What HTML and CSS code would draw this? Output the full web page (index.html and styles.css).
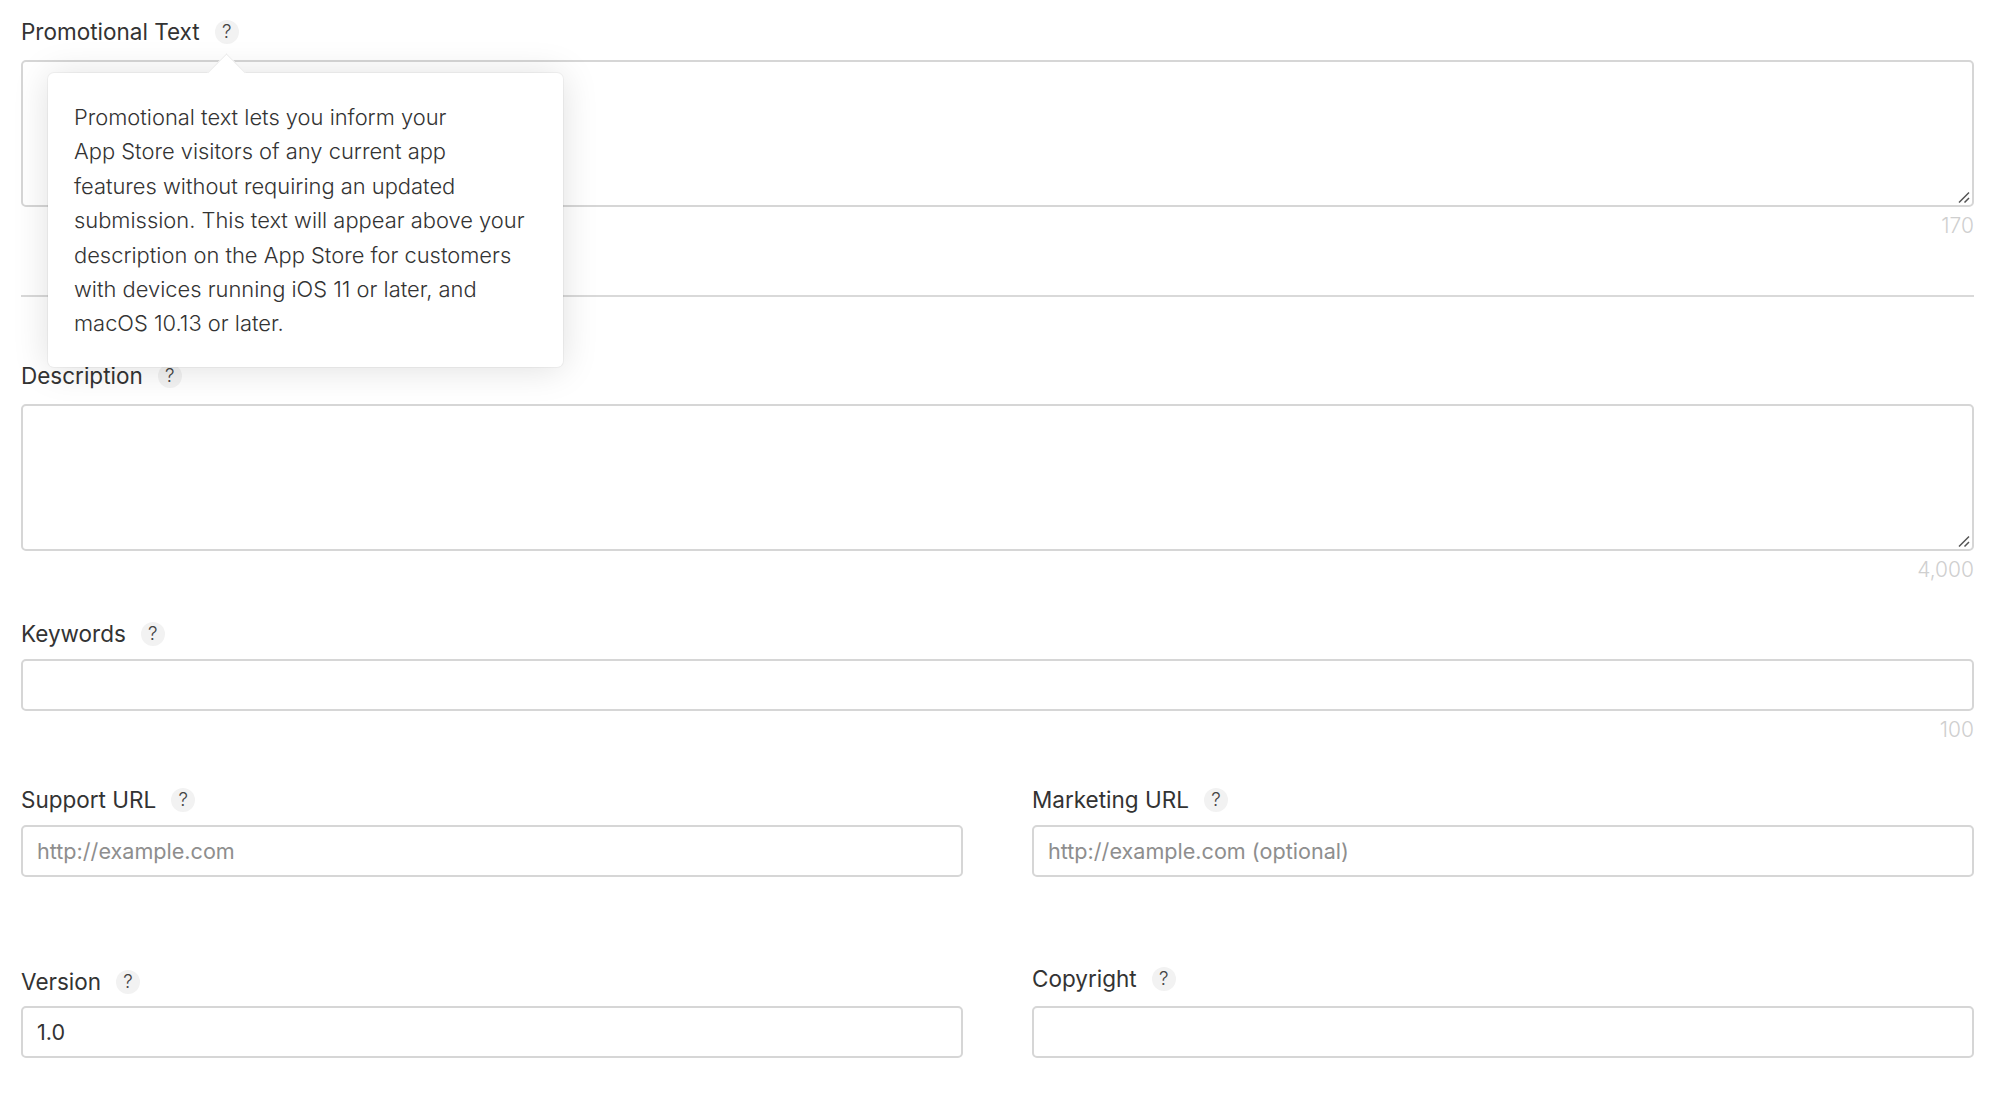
FILE: index.html
```html
<!DOCTYPE html>
<html lang="en">
<head>
<meta charset="utf-8">
<title>App Information</title>
<link rel="stylesheet" href="styles.css">
</head>
<body>
<form class="form">
  <section class="field field-promo">
    <div class="label-row">
      <label class="label">Promotional Text</label>
      <span class="help">?</span>
      <div class="tooltip">
        <p>Promotional text lets you inform your<br>App Store visitors of any current app<br>features without requiring an updated<br>submission. This text will appear above your<br>description on the App Store for customers<br>with devices running iOS 11 or later, and<br>macOS 10.13 or later.</p>
      </div>
    </div>
    <div class="area-wrap">
      <textarea class="control area"></textarea>
      <svg class="grip" width="12" height="12" viewBox="0 0 12 12" aria-hidden="true"><path d="M1 11.5 11 1.5M6.5 11.5 11 7"/></svg>
    </div>
    <div class="counter">170</div>
  </section>
  <hr class="rule">
  <section class="field field-desc">
    <div class="label-row">
      <label class="label">Description</label>
      <span class="help">?</span>
    </div>
    <div class="area-wrap">
      <textarea class="control area"></textarea>
      <svg class="grip" width="12" height="12" viewBox="0 0 12 12" aria-hidden="true"><path d="M1 11.5 11 1.5M6.5 11.5 11 7"/></svg>
    </div>
    <div class="counter">4,000</div>
  </section>
  <section class="field field-keys">
    <div class="label-row">
      <label class="label">Keywords</label>
      <span class="help">?</span>
    </div>
    <input class="control line" type="text">
    <div class="counter">100</div>
  </section>
  <div class="columns columns-url">
    <section class="field">
      <div class="label-row">
        <label class="label">Support URL</label>
        <span class="help">?</span>
      </div>
      <input class="control line" type="text" placeholder="http://example.com">
    </section>
    <section class="field">
      <div class="label-row">
        <label class="label">Marketing URL</label>
        <span class="help">?</span>
      </div>
      <input class="control line" type="text" placeholder="http://example.com (optional)">
    </section>
  </div>
  <div class="columns columns-meta">
    <section class="field">
      <div class="label-row">
        <label class="label">Version</label>
        <span class="help">?</span>
      </div>
      <input class="control line" type="text" value="1.0">
    </section>
    <section class="field">
      <div class="label-row label-row-raised">
        <label class="label">Copyright</label>
        <span class="help">?</span>
      </div>
      <input class="control line" type="text">
    </section>
  </div>
</form>
</body>
</html>
```
FILE: styles.css
```css
* { box-sizing: border-box; }
html, body { margin: 0; background: #fff; }
body {
  width: 2000px;
  height: 1110px;
  overflow: hidden;
  font-family: Inter, "Liberation Sans", sans-serif;
  color: #333;
}
.form { padding: 16px 26px 0 21px; }
.label-row {
  position: relative;
  display: flex;
  align-items: center;
  height: 32px;
  margin-bottom: 12px;
}
.label { font-size: 22.5px; line-height: 32px; color: #333; }
.help {
  width: 24px;
  height: 24px;
  margin-left: 15px;
  border-radius: 50%;
  background: #f2f2f2;
  color: #444;
  font-size: 19px;
  font-weight: 300;
  line-height: 24px;
  text-align: center;
}
.control {
  display: block;
  width: 100%;
  border: 2px solid #d6d6d6;
  border-radius: 5px;
  background: #fff;
  font-family: inherit;
  font-size: 21.6px;
  color: #333;
  outline: none;
}
.area-wrap { position: relative; }
.area { height: 147px; resize: none; padding: 12px 14px; margin: 0; }
.grip {
  position: absolute;
  right: 4px;
  bottom: 4px;
  fill: none;
  stroke: #555;
  stroke-width: 1.5;
}
.line { height: 52px; padding: 0 14px; }
.line::placeholder { color: #8e8e8e; opacity: 1; }
.counter {
  height: 24px;
  margin-top: 7px;
  font-size: 21px;
  font-weight: 300;
  line-height: 24px;
  text-align: right;
  color: #cfcfcf;
}
.rule { height: 2px; margin: 57px 0 63px; border: 0; background: #d9d9d9; }
.field-keys { margin-top: 36px; }
.field-keys .label-row { margin-bottom: 9px; }
.columns { display: grid; grid-template-columns: 942px 942px; column-gap: 69px; }
.columns .label-row { margin-bottom: 9px; }
.columns-url { margin-top: 42px; }
.columns-meta { margin-top: 89px; }
.columns-meta .label-row { margin-bottom: 8px; }
.columns .label-row-raised { margin-top: -3px; margin-bottom: 11px; }
.tooltip {
  position: absolute;
  z-index: 2;
  left: 27px;
  top: 57px;
  width: 515px;
  height: 294px;
  padding: 27px 26px;
  border-radius: 6px;
  background: #fff;
  box-shadow: 0 2px 36px rgba(0, 0, 0, 0.13), 0 0 0 1px rgba(0, 0, 0, 0.04);
  font-size: 21.9px;
  font-weight: 300;
  line-height: 34.4px;
  color: #333;
}
.tooltip::before {
  content: "";
  position: absolute;
  left: 165px;
  top: -14px;
  width: 26px;
  height: 26px;
  background: #fff;
  border-top: 1px solid #ebebeb;
  border-left: 1px solid #ebebeb;
  transform: rotate(45deg);
}
.tooltip p { position: relative; margin: 0; white-space: nowrap; }
```
